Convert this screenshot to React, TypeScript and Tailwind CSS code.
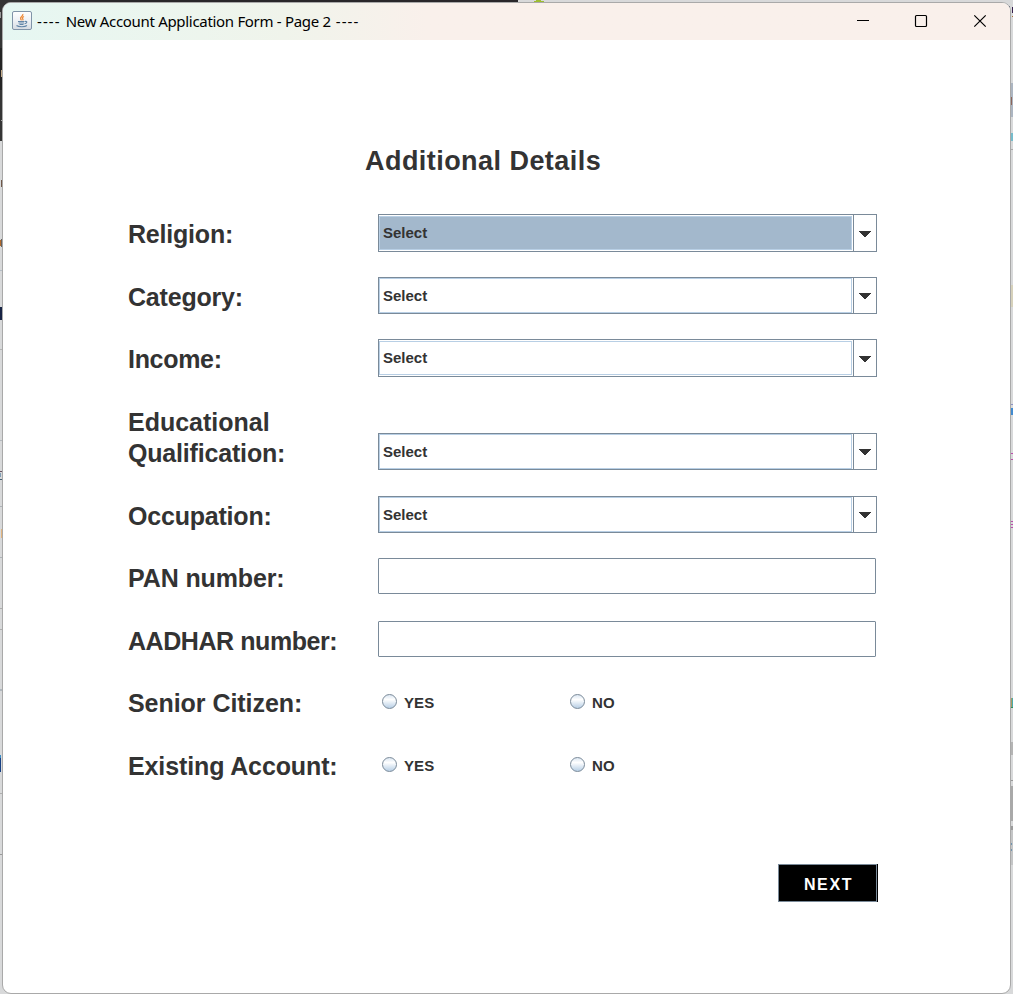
import React from "react";

function JavaIcon() {
  return (
    <svg width="20" height="20" viewBox="0 0 20 20">
      <defs>
        <linearGradient id="cupTile" x1="0" y1="0" x2="0" y2="1">
          <stop offset="0" stopColor="#ffffff" />
          <stop offset="0.5" stopColor="#eef1f5" />
          <stop offset="1" stopColor="#d5dbe2" />
        </linearGradient>
      </defs>
      <rect x="0.5" y="0.5" width="19" height="18" rx="1.5" fill="url(#cupTile)" stroke="#8094a8" />
      <path d="M10.8 3c.9 2.300-3.600 2.700-2.100 5.200.4.700.9 1 .9 1M12 5.500c-1.800.9-2 1.700-1.200 2.500.5.700.2 1-.2 1.400" fill="none" stroke="#ee8c3c" strokeWidth="1.3" />
      <path d="M6 10.500h6.500M6.500 12h5.500M7.500 13.500h4M13 10.500c2.500-.8 2.500 1.800-.4 2.200M4.500 14.500c2 1.600 8.500 1.600 10.500 0" fill="none" stroke="#6286a8" strokeWidth="1.1" />
    </svg>
  );
}

const marks = [
  "left-0 top-0 w-[518px] h-[3px] bg-[#29272a]",
  "left-0 top-0 w-5 h-[141px] bg-[#353535]",
  "left-0 top-[48px] w-[3px] h-[42px] bg-[#242424]",
  "left-0 top-[12px] w-px h-[6px] bg-[#999999]",
  "left-[1px] top-[70px] w-px h-[7px] bg-[#c3aa88]",
  "left-[1px] top-[120px] w-[2px] h-px bg-[#aaaaaa]",
  "left-[1px] top-[180px] w-[2px] h-[7px] bg-[#705848]",
  "left-0 top-[240px] w-px h-[6px] bg-[#b46b2b]",
  "left-[1px] top-[239px] w-[2px] h-[8px] bg-[#67625f]",
  "left-0 top-[270px] w-[3px] h-px bg-[#b5bdc5]",
  "left-0 top-[307px] w-[2px] h-[13px] bg-[#172344]",
  "left-0 top-[349px] w-[3px] h-px bg-[#b4b4b4]",
  "left-0 top-[440px] w-[3px] h-px bg-[#b4b9be]",
  "left-0 top-[471px] w-[3px] h-px bg-[#665463]",
  "left-0 top-[473px] w-px h-[4px] bg-[#819eb5]",
  "left-0 top-[479px] w-[3px] h-px bg-[#456174]",
  "left-0 top-[506px] w-[3px] h-px bg-[#aeb3b7]",
  "left-[1px] top-[529px] w-px h-[9px] bg-[#e3b57f]",
  "left-[2px] top-[529px] w-px h-[9px] bg-[#504052]",
  "left-0 top-[557px] w-[3px] h-px bg-[#aeb3b7]",
  "left-0 top-[608px] w-[3px] h-px bg-[#aeaeae]",
  "left-0 top-[629px] w-[3px] h-px bg-[#aeaeae]",
  "left-0 top-[689px] w-[3px] h-[2px] bg-[#b1b8be]",
  "left-0 top-[755px] w-px h-[3px] bg-[#3a8bc5]",
  "left-0 top-[758px] w-px h-[14px] bg-[#174084]",
  "left-0 top-[793px] w-[3px] h-px bg-[#aeaeae]",
  "left-0 top-[854px] w-[3px] h-px bg-[#999999]",
  "left-[534px] top-[1px] w-[10px] h-px bg-[#9dbd31]",
  "left-[536px] top-0 w-[5px] h-px bg-[#9dbd31]",
  "left-[1009px] top-[6px] w-px h-[5px] bg-[#28304e]",
  "left-[1012px] top-[7px] w-px h-[6px] bg-[#35204c]",
  "left-[1012px] top-[16px] w-px h-px bg-[#ae7132]",
  "left-[1011px] top-[83px] w-[2px] h-[34px] bg-[#acb5c1]",
  "left-[1011px] top-[97px] w-px h-[8px] bg-[#8c655b]",
  "left-[1011px] top-[133px] w-[2px] h-[8px] bg-[#76bccc]",
  "left-[1011px] top-[149px] w-[2px] h-px bg-[#aaaaaa]",
  "left-[1011px] top-[285px] w-[2px] h-[22px] bg-[#d6d1bb]",
  "left-[1011px] top-[404px] w-[2px] h-px bg-[#8c91c5]",
  "left-[1011px] top-[408px] w-[2px] h-[7px] bg-[#418bd0]",
  "left-[1011px] top-[453px] w-[2px] h-px bg-[#bc4dac]",
  "left-[1011px] top-[459px] w-[2px] h-px bg-[#bc4dac]",
  "left-[1011px] top-[521px] w-[2px] h-px bg-[#bc4dac]",
  "left-[1011px] top-[524px] w-[2px] h-px bg-[#bc4dac]",
  "left-[1011px] top-[527px] w-[2px] h-px bg-[#bc4dac]",
  "left-[1011px] top-[698px] w-px h-[9px] bg-[#a89c60]",
  "left-[1012px] top-[698px] w-px h-[9px] bg-[#49aaae]",
  "left-[1011px] top-[707px] w-[2px] h-px bg-[#318b5b]",
  "left-[1011px] top-[742px] w-[2px] h-[13px] bg-[#b4b4b4]",
  "left-[1011px] top-[780px] w-[2px] h-px bg-[#999999]",
  "left-[1011px] top-[786px] w-[2px] h-[35px] bg-[#a9a9a9]",
  "left-[1011px] top-[826px] w-[2px] h-[4px] bg-[#9b9b9b]",
  "left-[1011px] top-[830px] w-[2px] h-[35px] bg-[#c4c5c6]",
  "left-[1011px] top-[843px] w-px h-[2px] bg-[#7195b1]",
  "left-[1011px] top-[849px] w-px h-[2px] bg-[#7195b1]",
];

type RowProps = { label: React.ReactNode; size: string; spacing: string; children: React.ReactNode };

function Row({ label, size, spacing, children }: RowProps) {
  return (
    <div className={"flex shrink-0 " + size}>
      <div className={"w-[250px] shrink-0 whitespace-nowrap pt-[5px] text-[25px] font-bold leading-[31px] " + spacing}>{label}</div>
      {children}
    </div>
  );
}

function Combo({ tall = false, active = false }: { tall?: boolean; active?: boolean }) {
  return (
    <div className={"flex w-[499px] border border-[#7a8a99] " + (tall ? "h-[38px]" : "h-[37px]")}>
      <div
        className={
          "mr-px flex-1 border border-[#b8cfe5] pl-[3px] text-[15px] font-bold " +
          (tall ? "my-px " : "") +
          (active ? "bg-[#a3b8cc] leading-[31px]" : tall ? "leading-[32px]" : "leading-[34px]")
        }
      >
        Select
      </div>
      <div className={"flex w-[23px] items-center justify-center border-l border-[#7a8a99] " + (tall ? "pt-[2px]" : "")}>
        <svg width="12" height="6" viewBox="0 0 12 6" shapeRendering="crispEdges">
          <path d="M0 0H12V1H11V2H10V3H9V4H8V5H7V6H5V5H4V4H3V3H2V2H1V1H0Z" fill="#333333" />
        </svg>
      </div>
    </div>
  );
}

function Field() {
  return <div className="h-9 w-[498px] rounded-[1px] border border-[#7a8a99]" />;
}

function Choice({ label, shift = "" }: { label: string; shift?: string }) {
  return (
    <div className="flex h-[37px] w-[188px] items-center pl-1">
      <div className={"size-[15px] rounded-full border border-[#7a8a99] bg-linear-to-b from-[#dce7f2] via-white via-35% to-[#b8cfe5] " + shift} />
      <div className="pl-[7px] pt-[2px] text-[15px] font-bold leading-5 tracking-[0.1px]">{label}</div>
    </div>
  );
}

export default function App() {
  return (
    <div className="relative h-[994px] w-[1013px] overflow-hidden bg-[#d8d9da] font-['Liberation_Sans',sans-serif] text-[#333333]">
      {marks.map((m) => (
        <div key={m} className={"absolute " + m} />
      ))}
      <div className="relative ml-[2px] h-[994px] w-[1009px] pt-[2px]">
        <div className="flex h-[992px] flex-col overflow-hidden rounded-[9px] border border-[#a9a9a9] bg-white">
          <header className="flex h-[37px] shrink-0 bg-linear-to-r from-[#e6f7f2] from-0% via-[#f0f4eb] via-28% to-[#f9f0eb] to-42%">
            <div className="pl-[9px] pt-[8px]"><JavaIcon /></div>
            <div className="flex-1 whitespace-nowrap pl-[5px] pt-[8px] font-['Noto_Sans',sans-serif] text-[15px] leading-5 tracking-[-0.31px] text-black">
              <span className="tracking-[1.1px]">---- </span>New Account Application Form - Page 2<span className="tracking-[1.1px]"> ----</span>
            </div>
            <svg width="160" height="37" viewBox="0 0 160 37" fill="none" stroke="#000000">
              <path d="M7 17.500H19" />
              <rect x="65.500" y="12.500" width="11" height="11" rx="1" strokeWidth="1.200" />
              <path d="M124.300 12.300L135.700 23.700M135.700 12.300L124.300 23.700" strokeWidth="1.200" />
            </svg>
          </header>
          <main className="flex flex-1 flex-col pl-[125px]">
            <h1 className="h-[174px] shrink-0 whitespace-nowrap pl-[237px] pt-[105px] text-[27px] font-bold leading-8 tracking-[0.45px]">Additional Details</h1>
            <Row label="Religion:" size="h-[63px]" spacing="tracking-[-0.2px]"><Combo tall active /></Row>
            <Row label="Category:" size="h-[62px]" spacing="tracking-[-0.2px]"><Combo /></Row>
            <Row label="Income:" size="h-[63px]" spacing="tracking-[-0.3px]"><Combo tall /></Row>
            <Row
              label={<><span className="tracking-[0px]">Educational</span><br />Qualification:</>}
              size="h-[94px]"
              spacing="tracking-[-0.18px]"
            >
              <div className="pt-[31px]"><Combo /></div>
            </Row>
            <Row label="Occupation:" size="h-[62px]" spacing="tracking-[-0.2px]"><Combo /></Row>
            <Row label="PAN number:" size="h-[63px]" spacing="tracking-[-0.12px]"><Field /></Row>
            <Row label="AADHAR number:" size="h-[62px]" spacing="tracking-[-0.43px]"><Field /></Row>
            <Row label="Senior Citizen:" size="h-[63px]" spacing="tracking-[-0.05px]"><Choice label="YES" /><Choice label="NO" /></Row>
            <Row label="Existing Account:" size="h-[118px]" spacing="tracking-[-0.12px]">
              <Choice label="YES" shift="mb-[1px]" />
              <Choice label="NO" shift="mb-[1px]" />
            </Row>
            <div className="ml-[650px] h-[38px] w-[100px] border-r border-black">
              <button className="block h-[38px] w-[99px] border border-[#7a8a99] bg-black pl-[2px] pt-[4px] text-center text-[16px] font-bold leading-8 tracking-[1.6px] text-white">NEXT</button>
            </div>
          </main>
        </div>
      </div>
    </div>
  );
}
